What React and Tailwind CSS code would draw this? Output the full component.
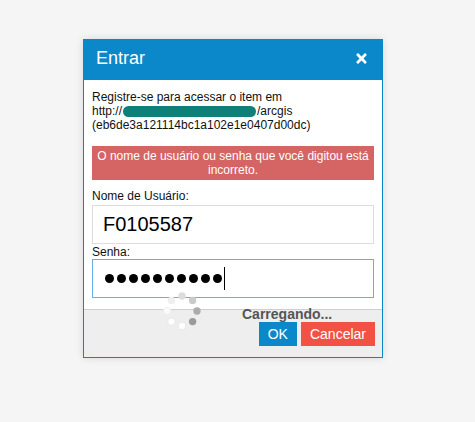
import React from "react";
import { FaTimes } from "react-icons/fa";

const font = { fontFamily: '"Liberation Sans", Arial, sans-serif' };

// spinner dots, clockwise from top
const spinnerDots = [
  { fill: "#dddddd", stroke: "none" },
  { fill: "#cacaca", stroke: "none" },
  { fill: "#acacac", stroke: "none" },
  { fill: "#9a9a9a", stroke: "none" },
  { fill: "#ffffff", stroke: "#e4e4e4" },
  { fill: "#ffffff", stroke: "#e4e4e4" },
  { fill: "#fafafa", stroke: "#ececec" },
  { fill: "#efefef", stroke: "none" },
];

function Spinner() {
  return (
    <svg width="40" height="40" viewBox="-20 -20 40 40">
      {spinnerDots.map((d, i) => {
        const a = (i * Math.PI) / 4;
        return (
          <circle
            key={i}
            cx={Math.sin(a) * 15}
            cy={-Math.cos(a) * 15}
            r="3.7"
            fill={d.fill}
            stroke={d.stroke}
            strokeWidth="0.8"
          />
        );
      })}
    </svg>
  );
}

export default function App() {
  return (
    <div className="min-h-[422px] w-full bg-[#f5f5f5] pt-[39px] pl-[83px]" style={font}>
      <div className="relative w-[300px] border border-[#0b86c8] bg-white shadow-[0_0_8px_rgba(0,0,0,0.12)]">
        {/* Header */}
        <div className="flex h-[40px] items-center justify-between bg-[#0b88ca] pl-[12px] pr-[13px] pb-[4px] text-white">
          <span className="text-[18px] leading-none">Entrar</span>
          <FaTimes className="text-[15px]" />
        </div>

        {/* Body */}
        <div className="px-[8px] pt-[10px] pb-[11px] text-[12px] leading-[14px] text-[#111]">
          <div>
            <div>Registre-se para acessar o item em</div>
            <div className="flex items-center">
              <span>http://</span>
              <span className="mx-[1px] inline-block h-[11px] w-[133px] rounded-[6px] bg-[#0e8078]" />
              <span>/arcgis</span>
            </div>
            <div>(eb6de3a121114bc1a102e1e0407d00dc)</div>
          </div>

          <div className="mt-[14px] bg-[#d56464] px-[4px] py-[3px] text-center text-white">
            O nome de usuário ou senha que você digitou está incorreto.
          </div>

          <div className="mt-[9px]">Nome de Usuário:</div>
          <input
            readOnly
            value="F0105587"
            className="mt-[2px] block h-[39px] w-full border border-[#dcdcdc] px-[10px] text-[20px] text-black outline-none"
            style={font}
          />

          <div className="mt-[1px]">Senha:</div>
          <div className="flex h-[39px] w-full items-center gap-[3px] border border-[#66aee8] pl-[12px]">
            {Array.from({ length: 10 }).map((_, i) => (
              <span key={i} className="h-[9px] w-[9px] rounded-full bg-black" />
            ))}
            <span className="ml-[-1px] h-[23px] w-[1px] bg-black" />
          </div>
        </div>

        {/* Footer */}
        <div className="flex h-[48px] items-start justify-end gap-[4px] border-t border-[#cfcfcf] bg-[#eeeeee] pt-[12px] pr-[7px] text-[14px] text-white">
          <button className="h-[24px] bg-[#0b88ca] px-[9px] leading-none" style={font}>OK</button>
          <button className="h-[24px] bg-[#f15243] px-[9px] leading-none" style={font}>Cancelar</button>
        </div>

        {/* Loading overlay */}
        <div className="absolute left-[78px] top-[251px]">
          <Spinner />
        </div>
        <div className="absolute left-[158px] top-[264px] text-[14px] font-bold text-[#555]">
          Carregando...
        </div>
      </div>
    </div>
  );
}
